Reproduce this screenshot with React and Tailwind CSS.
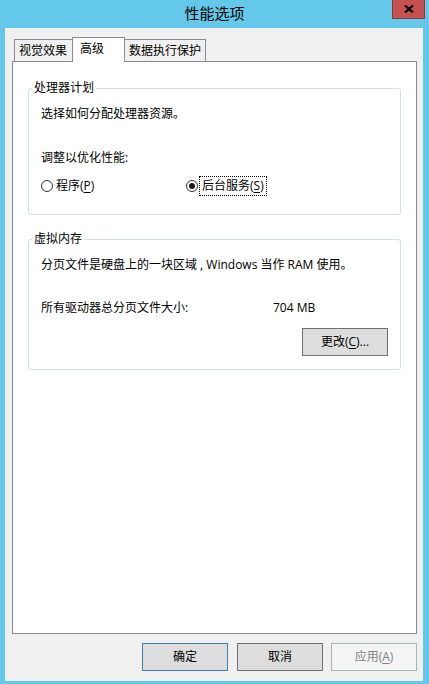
import React from "react";

const FONT = { fontFamily: '"Open Sans", "Noto Sans CJK SC", sans-serif' };

function U({ children }) {
  return <span className="underline underline-offset-[2px]">{children}</span>;
}

function Radio({ checked }) {
  return (
    <span className="flex h-[12px] w-[12px] shrink-0 items-center justify-center rounded-full border border-[#333333] bg-white">
      {checked && <span className="h-[6px] w-[6px] rounded-full bg-[#1a1a1a]" />}
    </span>
  );
}

function Group({ title, height, children }) {
  return (
    <div
      className="relative ml-[15px] w-[373px] rounded-[3px] border border-[#d5dfe5]"
      style={{ height }}
    >
      <span className="absolute left-[3px] top-[-9px] bg-white px-[2px] leading-[16px]">
        {title}
      </span>
      {children}
    </div>
  );
}

export default function App() {
  return (
    <div
      className="flex h-[684px] w-[429px] flex-col bg-[#63c8ea] text-[12px] text-black"
      style={FONT}
    >
      {/* Title bar */}
      <div className="relative flex h-[28px] shrink-0 justify-center pt-[3px]">
        <span className="text-[15px] leading-[20px]">性能选项</span>
        <div className="absolute left-[392px] top-0 flex h-[19px] w-[33px] items-center justify-center border-x border-b border-[#8a3a3a] bg-[#c75050]">
          <svg width="10" height="8" viewBox="0 0 10 8">
            <path d="M1 0.5 L9 7.5 M9 0.5 L1 7.5" stroke="#000" strokeWidth="2.2" />
          </svg>
        </div>
      </div>

      {/* Client area */}
      <div className="ml-[5px] flex h-[653px] w-[418px] flex-col bg-[#f0f0f0] pt-[9px]">
        {/* Tabs */}
        <div className="ml-[9px] flex h-[24px] items-end">
          <div className="flex h-[22px] w-[58px] items-center border-l border-t border-[#898c95] bg-[#f0f0f0] pl-[4px] leading-[16px]">
            视觉效果
          </div>
          <div className="relative z-10 mb-[-1px] flex h-[25px] w-[53px] items-start border-x border-t border-[#898c95] bg-white pl-[7px] pt-[3px] leading-[16px]">
            高级
          </div>
          <div className="flex h-[22px] w-[81px] items-center border-r border-t border-[#898c95] bg-[#f0f0f0] pl-[4px] leading-[16px]">
            数据执行保护
          </div>
        </div>

        {/* Panel */}
        <div className="ml-[7px] flex h-[573px] w-[405px] flex-col border border-[#898c95] bg-white pt-[26px]">
          <Group title="处理器计划" height="127px">
            <div className="flex flex-col pl-[12px]">
              <div className="mt-[17px] leading-[16px]">选择如何分配处理器资源。</div>
              <div className="mt-[28px] leading-[16px]">调整以优化性能:</div>
              <div className="mt-[10px] flex h-[20px] items-center">
                <div className="flex w-[145px] items-center">
                  <Radio />
                  <span className="ml-[3px] leading-[16px]">
                    程序(<U>P</U>)
                  </span>
                </div>
                <div className="flex items-center">
                  <Radio checked />
                  <span className="ml-[1px] flex h-[20px] items-center border border-dotted border-black px-[2px] leading-[16px]">
                    后台服务(<U>S</U>)
                  </span>
                </div>
              </div>
            </div>
          </Group>

          <div className="h-[24px]" />

          <Group title="虚拟内存" height="131px">
            <div className="flex flex-col pl-[12px]">
              <div className="mt-[17px] leading-[16px]">
                分页文件是硬盘上的一块区域 , Windows 当作 RAM 使用。
              </div>
              <div className="mt-[27px] flex leading-[16px]">
                <span className="w-[232px]">所有驱动器总分页文件大小:</span>
                <span>704 MB</span>
              </div>
              <div className="ml-[261px] mt-[12px] flex h-[28px] w-[86px] items-center justify-center border border-[#707070] bg-[#dddddd] leading-[16px]">
                更改(<U>C</U>)...
              </div>
            </div>
          </Group>
        </div>

        {/* Bottom buttons */}
        <div className="mt-[9px] flex pl-[137px]">
          <div className="flex h-[28px] w-[86px] items-center justify-center border border-[#3c7fb1] bg-[#dddddd] leading-[16px]">
            确定
          </div>
          <div className="ml-[9px] flex h-[28px] w-[86px] items-center justify-center border border-[#707070] bg-[#dddddd] leading-[16px]">
            取消
          </div>
          <div className="ml-[8px] flex h-[28px] w-[86px] items-center justify-center border border-[#adb2b5] bg-[#f4f4f4] leading-[16px] text-[#838383]">
            应用(<U>A</U>)
          </div>
        </div>
      </div>
    </div>
  );
}
